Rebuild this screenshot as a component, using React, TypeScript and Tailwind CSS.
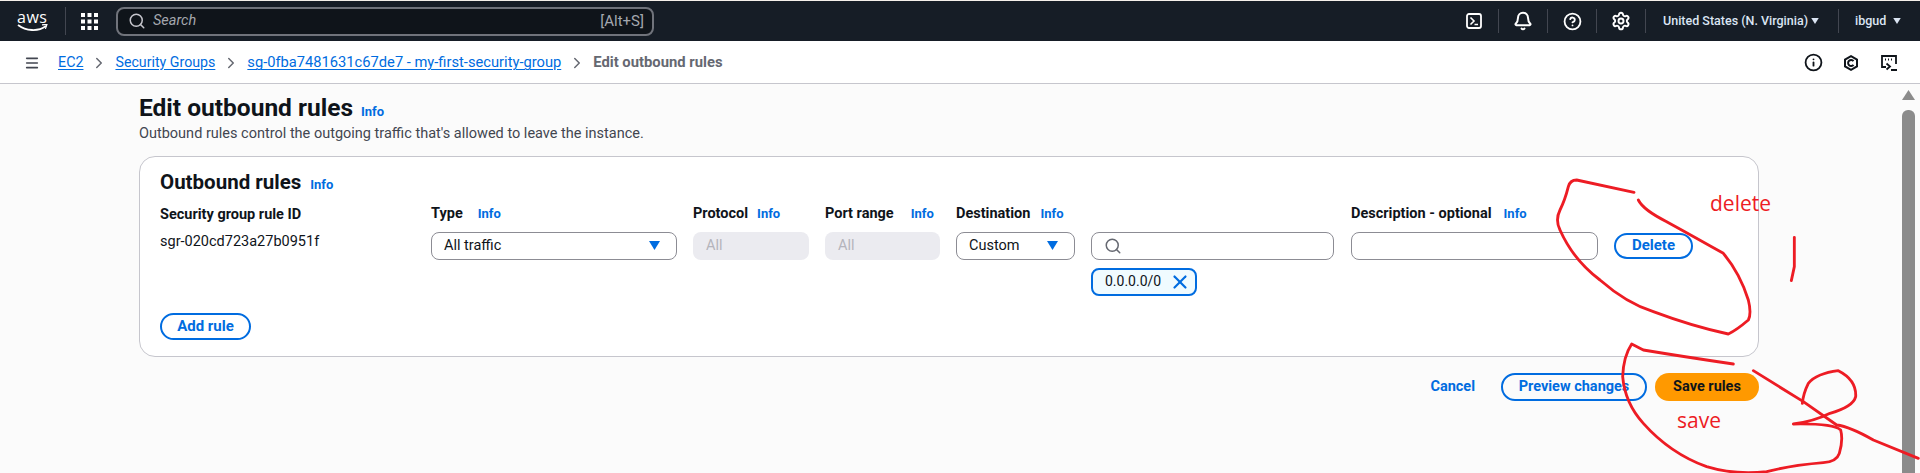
import React from "react";
import { Search, Bell, CircleHelp, Settings, Info as InfoIcon, X, Menu, ChevronRight } from "lucide-react";

const Caret = ({ className }: { className: string }) => (
  <svg viewBox="0 0 10 8" className={className} fill="currentColor"><path d="M0 0h10L5 8z" /></svg>
);

const InfoLink = ({ className = "" }: { className?: string }) => (
  <span className={"text-[13px] font-bold text-[#006ce0] " + className}>Info</span>
);

const Label = ({ children, gap }: { children: React.ReactNode; gap: string }) => (
  <div className={"flex items-center text-[14.5px] font-bold text-[#0f141a] " + gap}>
    <span>{children}</span>
    <InfoLink />
  </div>
);

const Sep = () => <div className="w-px h-[24px] bg-[#424650]" />;

const IconSlot = ({ children }: { children: React.ReactNode }) => (
  <div className="w-[48px] flex items-center justify-center">{children}</div>
);

const Crumb = ({ children, size }: { children: React.ReactNode; size: string }) => (
  <>
    <span className={"text-[#006ce0] underline underline-offset-2 " + size}>{children}</span>
    <ChevronRight className="w-[18px] h-[18px] text-[#656871] mx-[7px]" strokeWidth={2} />
  </>
);

const selectCls = "h-[28px] rounded-[8px] border border-[#8c8c94] bg-white flex items-center justify-between text-[14.5px] text-[#0f141a] pl-[12px] pr-[16px]";

export default function App() {
  return (
    <div className="relative w-[1920px] h-[473px] overflow-hidden bg-[#fbfbfb] font-['Roboto',sans-serif] text-[14px]">
      {/* top nav */}
      <header className="h-[41px] bg-[#161d26] border-t border-[#f5f0ea] flex items-center text-white">
        <div className="w-[65px] pl-[17px] flex flex-col items-start">
          <span className="text-[16px] leading-[13px] font-medium tracking-[0.5px] font-['Open_Sans',sans-serif]">aws</span>
          <svg viewBox="0 0 31 8" className="w-[31px] h-[8px]" fill="none">
            <path d="M1 1c8 6 20 7 28 1" stroke="#fff" strokeWidth="1.8" />
            <path d="M25 .8l5-.5-1.6 4.6" stroke="#fff" strokeWidth="1.2" />
          </svg>
        </div>
        <div className="w-px h-[28px] bg-[#424650]" />
        <svg viewBox="0 0 17 17" className="w-[17px] h-[17px] ml-[15px]" fill="#fff">
          <rect x="0" y="0" width="4" height="4" /><rect x="6.5" y="0" width="4" height="4" /><rect x="13" y="0" width="4" height="4" />
          <rect x="0" y="6.5" width="4" height="4" /><rect x="6.5" y="6.5" width="4" height="4" /><rect x="13" y="6.5" width="4" height="4" />
          <rect x="0" y="13" width="4" height="4" /><rect x="6.5" y="13" width="4" height="4" /><rect x="13" y="13" width="4" height="4" />
        </svg>
        <div className="ml-[18px] w-[538px] h-[29px] rounded-[8px] border-2 border-[#70737b] bg-[#0f141a] flex items-center pl-[10px] pr-[8px]">
          <Search className="w-[18px] h-[18px] text-[#c6c6cd]" strokeWidth={2} />
          <span className="ml-[7px] italic text-[#a4a7ae] text-[14.5px]">Search</span>
          <span className="ml-auto text-[#a4a7ae] text-[15px]">[Alt+S]</span>
        </div>
        <div className="ml-auto flex items-center">
          <IconSlot>
            <svg viewBox="0 0 16 16" className="w-[16px] h-[16px]" fill="none" stroke="#fff" strokeWidth="1.8">
              <rect x="1" y="1" width="14" height="14" rx="2" />
              <path d="M4.5 4.5L8 8l-3.5 3.5M8.5 11.5h3.5" strokeWidth="1.6" />
            </svg>
          </IconSlot>
          <Sep />
          <IconSlot><Bell className="w-[20px] h-[20px]" strokeWidth={2.4} /></IconSlot>
          <Sep />
          <IconSlot><CircleHelp className="w-[19px] h-[19px]" strokeWidth={2.3} /></IconSlot>
          <Sep />
          <IconSlot><Settings className="w-[20px] h-[20px]" strokeWidth={2.3} /></IconSlot>
          <Sep />
          <span className="ml-[17px] text-[12.5px] font-medium text-[#dbe5f3] w-[142px] whitespace-nowrap">United States (N. Virginia)</span>
          <Caret className="w-[8px] h-[6px] ml-[6px] mr-[19px] text-[#dbe5f3]" />
          <Sep />
          <span className="ml-[16px] text-[12.5px] font-medium text-[#dbe5f3] w-[32px]">ibgud</span>
          <Caret className="w-[8px] h-[6px] ml-[6px] mr-[19px] text-[#dbe5f3]" />
        </div>
      </header>

      {/* breadcrumb bar */}
      <div className="h-[43px] bg-white border-b border-[#c6c6cd] flex items-center pl-[24px] pt-[1px] text-[14px]">
        <Menu className="w-[16px] h-[16px] text-[#424650] mr-[18px]" strokeWidth={2.4} />
        <Crumb size="text-[14.3px]">EC2</Crumb>
        <Crumb size="text-[14.2px]">Security Groups</Crumb>
        <Crumb size="text-[14.7px]">sg-0fba7481631c67de7 - my-first-security-group</Crumb>
        <span className="font-bold text-[#656871] text-[14.8px]">Edit outbound rules</span>
        <div className="ml-auto flex items-center pr-[12px] text-[#0f141a]">
          <div className="w-[38px] flex justify-center"><InfoIcon className="w-[19px] h-[19px]" strokeWidth={2.3} /></div>
          <div className="w-[38px] flex justify-center">
            <svg viewBox="0 0 16 16" className="w-[16px] h-[16px]" fill="none" stroke="currentColor" strokeWidth="2">
              <path d="M8 1.2l6 3.4v6.8l-6 3.4-6-3.4V4.6z" />
              <path d="M10.5 6.2A3 3 0 1 0 10.5 9.8" />
            </svg>
          </div>
          <div className="w-[38px] flex justify-center">
            <svg viewBox="0 0 16 16" className="w-[16px] h-[16px]" fill="none" stroke="currentColor" strokeWidth="1.8">
              <path d="M5 12H1V1h14v8" />
              <path d="M4 4.5h1M7 4.5h1M10 4.5h1" strokeWidth="2" />
              <path d="M5.5 8.5L9 11.5l-3.5 3M10 15h6" />
            </svg>
          </div>
        </div>
      </div>

      {/* content */}
      <main className="pl-[139px] w-[1759px] box-content">
        <div className="mt-[7px] flex items-baseline">
          <h1 className="text-[24.5px] leading-[34px] font-bold text-[#0f141a]">Edit outbound rules</h1>
          <InfoLink className="ml-[8px]" />
        </div>
        <p className="leading-[18px] text-[#424650] text-[14.5px]">Outbound rules control the outgoing traffic that's allowed to leave the instance.</p>

        <section className="mt-[13px] w-[1620px] h-[201px] rounded-[16px] border border-[#c6c6cd] bg-white pl-[20px] pt-[13px]">
          <div className="flex items-baseline">
            <h2 className="text-[20.5px] leading-[24px] font-bold text-[#0f141a]">Outbound rules</h2>
            <InfoLink className="ml-[9px]" />
          </div>
          <div className="mt-[9px] grid grid-cols-[271px_262px_132px_131px_135px_260px_263px_80px] grid-rows-[20px_72px]">
            <div className="text-[14.5px] font-bold text-[#0f141a]">Security group rule ID</div>
            <Label gap="gap-[15px]">Type</Label>
            <Label gap="gap-[9px]">Protocol</Label>
            <Label gap="gap-[17px]">Port range</Label>
            <Label gap="gap-[10px]">Destination</Label>
            <div />
            <Label gap="gap-[12px]">Description - optional</Label>
            <div />

            <div className="pt-[9px] text-[14.5px] leading-[18px] text-[#0f141a]">sgr-020cd723a27b0951f</div>
            <div className="pt-[8px]">
              <div className={selectCls + " w-[246px]"}>All traffic<Caret className="w-[11px] h-[9px] text-[#006ce0]" /></div>
            </div>
            <div className="pt-[8px]">
              <div className="w-[116px] h-[28px] rounded-[8px] bg-[#ebebf0] flex items-center pl-[13px] text-[#b4b4bb] text-[14.5px]">All</div>
            </div>
            <div className="pt-[8px]">
              <div className="w-[115px] h-[28px] rounded-[8px] bg-[#ebebf0] flex items-center pl-[13px] text-[#b4b4bb] text-[14.5px]">All</div>
            </div>
            <div className="pt-[8px]">
              <div className={selectCls + " w-[119px]"}>Custom<Caret className="w-[11px] h-[9px] text-[#006ce0]" /></div>
            </div>
            <div className="pt-[8px] flex flex-col items-start">
              <div className="shrink-0 w-[243px] h-[28px] rounded-[8px] border border-[#8c8c94] bg-white flex items-center pl-[12px]">
                <Search className="w-[18px] h-[18px] text-[#656871]" strokeWidth={2} />
              </div>
              <div className="shrink-0 mt-[8px] h-[28px] w-[106px] rounded-[8px] border-2 border-[#006ce0] bg-[#f0fbff] flex items-center pl-[12px] text-[14px] text-[#0f141a]">
                0.0.0.0/0
                <X className="w-[22px] h-[22px] ml-[8px] text-[#006ce0]" strokeWidth={2.4} />
              </div>
            </div>
            <div className="pt-[8px]">
              <div className="w-[247px] h-[28px] rounded-[8px] border border-[#8c8c94] bg-white" />
            </div>
            <div className="pt-[9px]">
              <div className="w-[79px] h-[26px] rounded-full border-2 border-[#006ce0] flex items-center justify-center text-[15px] font-bold text-[#006ce0]">Delete</div>
            </div>
          </div>
          <div className="mt-[17px] w-[91px] h-[27px] rounded-full border-2 border-[#006ce0] flex items-center justify-center text-[15px] font-bold text-[#006ce0]">Add rule</div>
        </section>

        <div className="mt-[16px] w-[1620px] flex items-center justify-end">
          <span className="font-bold text-[#006ce0] text-[14.5px] mr-[26px]">Cancel</span>
          <div className="w-[146px] h-[28px] rounded-full border-2 border-[#006ce0] flex items-center justify-center font-bold text-[#006ce0] text-[14.5px]">Preview changes</div>
          <div className="ml-[8px] w-[104px] h-[28px] rounded-full bg-[#ff9900] flex items-center justify-center font-bold text-[#0f141a] text-[14.5px]">Save rules</div>
        </div>
      </main>

      {/* scrollbar */}
      <div className="absolute left-[1902px] top-[84px] w-[13px] flex flex-col items-center">
        <svg viewBox="0 0 13 10" className="w-[13px] h-[10px] mt-[6px]" fill="#8b8b8b"><path d="M6.5 0L13 10H0z" /></svg>
        <div className="mt-[10px] w-[13px] h-[380px] rounded-t-[6px] bg-[#8b8b8b]" />
      </div>

      {/* hand-drawn annotations */}
      <svg viewBox="0 0 1560 939" className="absolute left-[1400px] top-[160px] w-[520px] h-[313px]" fill="none" stroke="#ed1c24" strokeWidth="8.5" strokeLinecap="round" strokeLinejoin="round">
        <path d="M702 97L530 60Q510 60 505 80Q495 120 480 150Q465 180 480 210Q520 300 600 360Q680 430 760 455Q880 500 985 522Q1010 510 1045 480Q1055 460 1045 420Q1020 340 970 280Q900 240 800 185Q730 150 715 120" />
        <path d="M1183 232L1183 320L1174 362" />
        <path d="M1000 612Q850 590 730 570L695 552Q670 590 668 650Q675 730 730 790Q810 880 920 920Q1000 945 1100 935Q1180 915 1270 908Q1310 905 1318 880Q1330 840 1322 810Q1300 790 1180 792Q1240 785 1290 760Q1360 740 1367 710Q1370 660 1315 632Q1250 640 1225 670Q1210 700 1207 730" />
        <path d="M1060 632L1210 725L1310 795Q1350 800 1420 840L1555 895" />
      </svg>
      <span className="absolute left-[1710px] top-[190px] text-[21px] leading-[26px] text-[#ed1c24] font-['Open_Sans',sans-serif]">delete</span>
      <span className="absolute left-[1677px] top-[407px] text-[21px] leading-[26px] text-[#ed1c24] font-['Open_Sans',sans-serif]">save</span>
    </div>
  );
}
